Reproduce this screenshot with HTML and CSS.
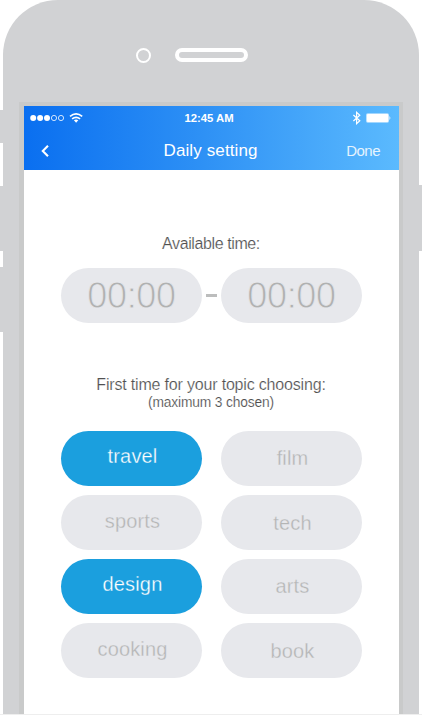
FILE: index.html
```html
<!DOCTYPE html>
<html lang="en">
<head>
<meta charset="utf-8">
<title>Daily setting</title>
<link rel="stylesheet" href="styles.css">
</head>
<body>
<div class="stage">
  <i class="side mute"></i><i class="side vol-up"></i><i class="side vol-down"></i><i class="side power"></i>
  <div class="phone">
    <div class="bezel"><i class="camera"></i><i class="speaker"></i></div>
    <main class="screen">
      <header class="header">
        <div class="status">
          <svg class="signal" width="54" height="12" viewBox="0 0 54 12">
            <g fill="#fff"><circle cx="3.2" cy="6" r="3"/><circle cx="10.1" cy="6" r="3"/><circle cx="17" cy="6" r="3"/></g>
            <g fill="none" stroke="#fff" stroke-width=".8"><circle cx="24" cy="6" r="2.6"/><circle cx="31" cy="6" r="2.6"/></g>
            <g fill="none" stroke="#fff" stroke-width="1.7"><path d="M40 4.3q6.1-4.9 12.2 0M42.1 6.9q4-3.1 8 0"/></g>
            <path fill="#fff" d="M43.9 8.3q2.2-1.4 4.4 0l-2.2 2.4z"/>
          </svg>
          <span class="clock">12:45 AM</span>
          <svg class="power-icons" width="40" height="14" viewBox="0 0 40 14">
            <path d="M2.4 4l6.4 5.8-3.2 2.9V1.3l3.2 2.9-6.4 5.8" fill="none" stroke="#fff" stroke-width="1.2"/>
            <rect x="15" y="2.3" width="23" height="9.4" rx="1.6" fill="#fff" fill-opacity=".6"/>
            <rect x="16" y="3.1" width="21.2" height="7.8" rx="1" fill="#fff"/>
            <path d="M38.5 5q1.6 2 0 4z" fill="#fff"/>
          </svg>
        </div>
        <nav class="nav">
          <svg class="back" width="10" height="14" viewBox="0 0 10 14"><path d="M8 1.8L2.8 7 8 12.2" fill="none" stroke="#fff" stroke-width="2.1"/></svg>
          <h1 class="title">Daily setting</h1>
          <span class="done">Done</span>
        </nav>
      </header>
      <h2 class="label available">Available time:</h2>
      <div class="times">
        <div class="pill time">00:00</div><i class="dash"></i><div class="pill time">00:00</div>
      </div>
      <h2 class="label choose">First time for your topic choosing:</h2>
      <p class="hint">(maximum 3 chosen)</p>
      <div class="topics">
        <div class="pill topic chosen">travel</div><div class="pill topic right">film</div>
        <div class="pill topic low">sports</div><div class="pill topic right low">tech</div>
        <div class="pill topic chosen">design</div><div class="pill topic right">arts</div>
        <div class="pill topic low">cooking</div><div class="pill topic right low">book</div>
      </div>
    </main>
  </div>
</div>
</body>
</html>
```
FILE: styles.css
```css
* { box-sizing: border-box; }
body { margin: 0; background: #fff; font-family: "Liberation Sans", Arial, sans-serif; }
h1, h2, p { margin: 0; font-weight: 400; }
.stage { position: relative; width: 422px; height: 715px; overflow: hidden; border-bottom: 1px solid #eee; }
.phone { width: 416px; height: 714px; margin-left: 3px; padding: 0 16px; background: #d1d2d4; border-radius: 55px 55px 0 0; overflow: hidden; }

/* hardware buttons overhanging the phone body */
.side { position: absolute; width: 8px; background: #d1d2d4; border-radius: 2px; }
.mute { left: -2px; top: 110px; height: 33px; }
.vol-up { left: -2px; top: 186px; height: 65px; }
.vol-down { left: -2px; top: 267px; height: 65px; }
.power { right: -2px; top: 185px; height: 66px; }

.bezel { display: flex; align-items: center; gap: 24px; height: 102px; padding: 8px 0 0 117px; }
.camera { width: 15px; height: 15px; border: 2px solid #fff; border-radius: 50%; }
.speaker { width: 73px; height: 14px; margin-bottom: 1px; border: 4px solid #fff; border-radius: 7px; }

.screen { width: 384px; height: 613px; padding: 4px 4px 0 4px; background: linear-gradient(#fff, #fff) 4.5px 4px / 375px 100% no-repeat #c9caca; }
.header { width: 375px; height: 64px; margin-left: .5px; color: #fff; background: linear-gradient(90deg, #0a6ff0, #2e91f5 48%, #5bbafe); }
.status { display: flex; align-items: center; height: 24px; padding: 0 8px 0 6px; }
.signal { width: 54px; }
.clock { margin-left: 101px; width: 52px; font-size: 11.3px; font-weight: 700; white-space: nowrap; }
.power-icons { margin-left: auto; }
.nav { display: flex; align-items: center; height: 40px; padding: 1px 18.5px 0 16px; }
.title { margin-left: 114px; font-size: 17px; letter-spacing: .12px; }
.done { margin-left: auto; font-size: 15px; letter-spacing: -.5px; opacity: .85; }

.label { color: #505050; font-size: 16px; line-height: 20px; text-align: center; -webkit-text-stroke: .2px #fff; }
.available { margin-top: 64px; letter-spacing: -.4px; }
.choose { margin-top: 51.5px; letter-spacing: -.18px; }
.hint { color: #505050; font-size: 13.8px; letter-spacing: -.15px; line-height: 16px; text-align: center; -webkit-text-stroke: .15px #fff; }
.pill { width: 141px; height: 55px; line-height: 55px; border-radius: 27.5px; background: #e7e8ec; color: #b9baba; text-align: center; }
.times { display: flex; align-items: center; justify-content: space-between; width: 301px; margin: 14px 0 0 37.5px; }
.time { padding: 1px 0 0 1px; font-size: 36px; letter-spacing: -.3px; line-height: 54px; color: #b0b1b1; -webkit-text-stroke: .8px #e7e8ec; }
.dash { width: 11px; height: 2.5px; background: #bcbdbd; }
.topics { display: grid; grid-template-columns: 141px 141px; gap: 9px 19px; margin: 20px 0 0 37.5px; }
.topic { padding-left: 3px; font-size: 20px; letter-spacing: .15px; line-height: 50.5px; color: #b4b5b5; -webkit-text-stroke: .3px #e7e8ec; }
.right { line-height: 55.5px; }
.low { padding-top: 1px; }
.chosen { background: #1b9fde; color: #fff; -webkit-text-stroke: .3px #1b9fde; }
```
